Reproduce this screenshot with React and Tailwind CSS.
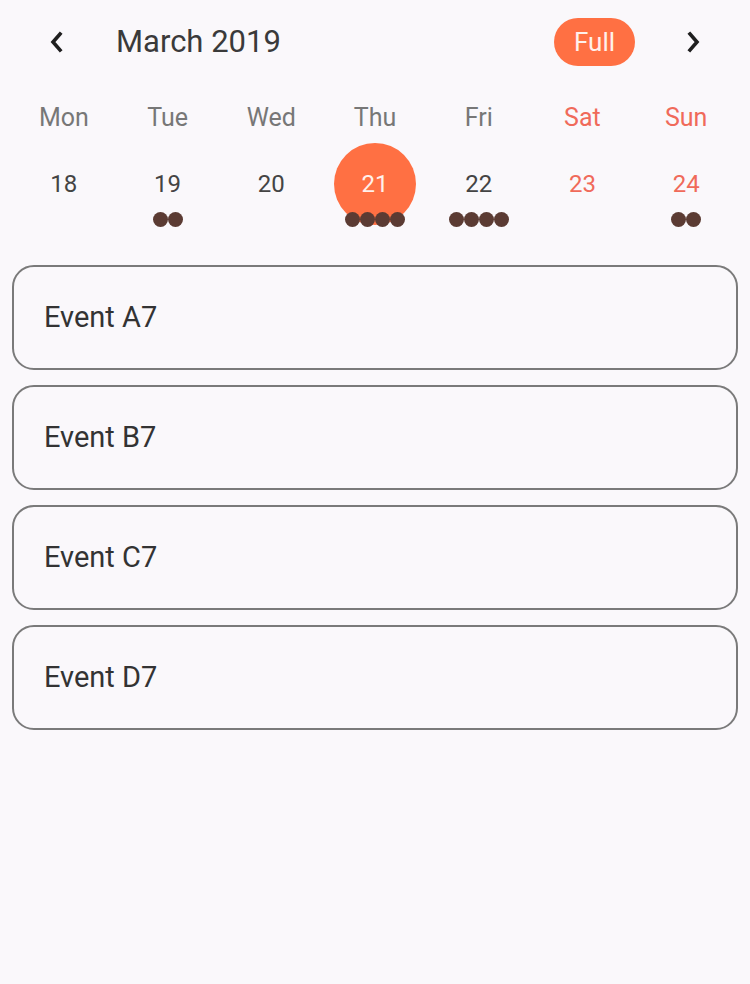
const days = [
	{ name: 'Mon', date: 18, dots: 0 },
	{ name: 'Tue', date: 19, dots: 2 },
	{ name: 'Wed', date: 20, dots: 0 },
	{ name: 'Thu', date: 21, dots: 4, selected: true },
	{ name: 'Fri', date: 22, dots: 4 },
	{ name: 'Sat', date: 23, dots: 0, weekend: true },
	{ name: 'Sun', date: 24, dots: 2, weekend: true },
]

const events = ['Event A7', 'Event B7', 'Event C7', 'Event D7']

function Chevron({ dir }) {
	return (
		<svg width="20" height="24" viewBox="0 0 20 24" fill="none">
			<path
				d={dir === 'left' ? 'M13 4 L6 12 L13 20' : 'M7 4 L14 12 L7 20'}
				stroke="#1f1f1f"
				strokeWidth="3.6"
				strokeLinecap="square"
				strokeLinejoin="miter"
			/>
		</svg>
	)
}

export default function App() {
	return (
		<div className="min-h-[984px] w-[750px] bg-[#faf8fb] font-['Roboto',sans-serif]">
			<header className="flex h-[84px] items-center">
				<button className="flex w-[114px] justify-center">
					<Chevron dir="left" />
				</button>
				<span className="text-[31px] text-[#3a3a3a] ml-[2px]">March 2019</span>
				<div className="flex-1" />
				<span className="flex h-[48px] w-[81px] items-center justify-center rounded-full bg-[#ff7043] text-[26px] text-white/90">
					Full
				</span>
				<button className="flex w-[115px] justify-center">
					<Chevron dir="right" />
				</button>
			</header>

			<div className="mt-[20px] grid grid-cols-7 px-[12px]">
				{days.map((d) => (
					<div
						key={d.name}
						className={`text-center text-[25px] leading-[28px] ${d.weekend ? 'text-[#f06a5a]' : 'text-[#777]'}`}
					>
						{d.name}
					</div>
				))}
			</div>

			<div className="mt-[11px] grid grid-cols-7 px-[12px]">
				{days.map((d) => (
					<div key={d.date} className="flex flex-col items-center">
						<div
							className={`flex h-[82px] w-[82px] items-center justify-center rounded-full text-[24px] ${
								d.selected
									? 'bg-[#ff7043] text-white/90'
									: d.weekend
									? 'text-[#f06a5a]'
									: 'text-[#444]'
							}`}
						>
							{d.date}
						</div>
						<div className="relative -mt-[13px] flex h-[15px]">
							{Array.from({ length: d.dots }).map((_, i) => (
								<span key={i} className="h-[15px] w-[15px] rounded-full bg-[#5b3b33]" />
							))}
						</div>
					</div>
				))}
			</div>

			<div className="mt-[38px] flex flex-col gap-[15px] px-[12px]">
				{events.map((e) => (
					<div
						key={e}
						className="flex h-[105px] items-center rounded-[22px] border-2 border-[#7a7a7a] pl-[30px] text-[29px] text-[#333]"
					>
						{e}
					</div>
				))}
			</div>
		</div>
	)
}
